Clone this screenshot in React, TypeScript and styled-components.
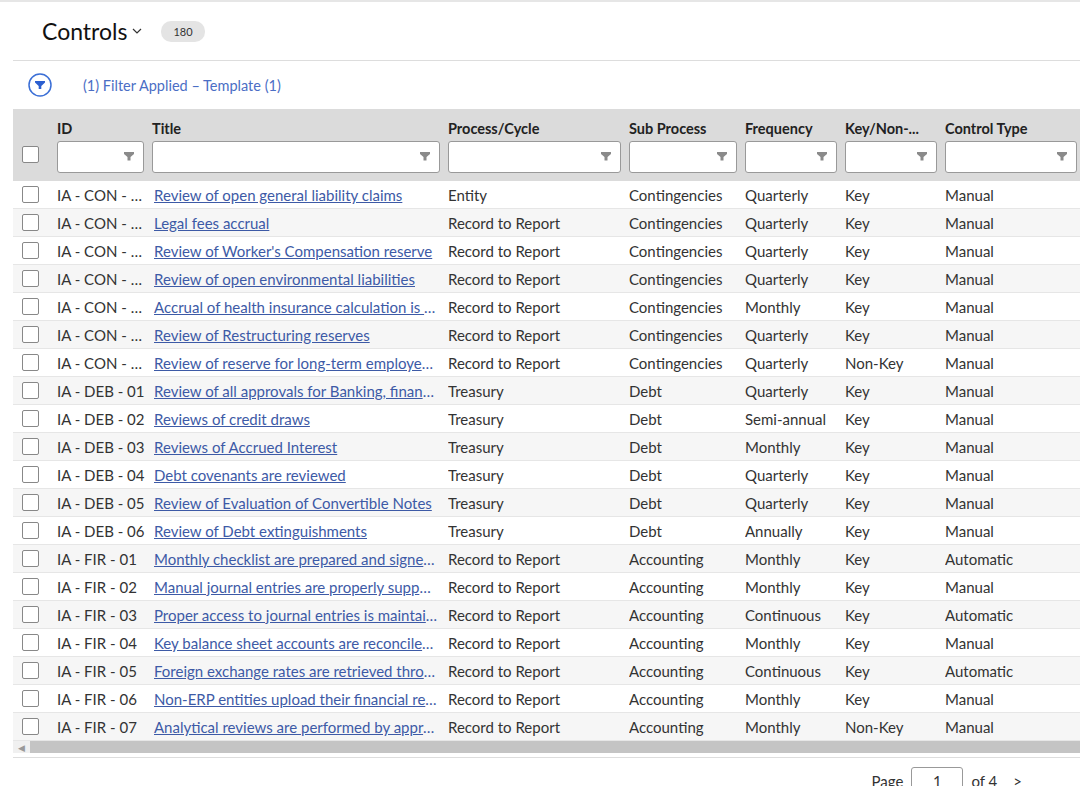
import React from "react";
import styled, { createGlobalStyle } from "styled-components";

const Global = createGlobalStyle`
  html, body { margin: 0; padding: 0; background: #fff; overflow: hidden; }
  body { font-family: "Lato", "Open Sans", sans-serif; color: #222; width: 1080px; height: 786px; }
`;

const COLS = "44px 95px 296px 181px 116px 100px 100px 140px";

const Page = styled.div`
  border-top: 2px solid #e6e6e6;
  padding-left: 13px;
  width: 1067px;
  overflow: hidden;
`;
const Header = styled.div`
  display: flex; align-items: center; height: 58px; padding-left: 29px;
  border-bottom: 1px solid #ddd;
`;
const H1 = styled.div`font-size: 23px; color: #111; display: flex; align-items: center; gap: 4px;`;
const Badge = styled.span`
  margin-left: 18px; background: #e4e4e4; border-radius: 10px; font-size: 11px;
  padding: 4px 12px; color: #333;
`;
const FilterBar = styled.div`
  display: flex; align-items: center; height: 48px; padding-left: 15px; gap: 31px;
  color: #4b6ec5; font-size: 14.5px;
`;
const Grid = styled.div`display: grid; grid-template-columns: ${COLS}; width: 1072px;`;
const HeadRow = styled(Grid)`
  background: #dbdbdb; height: 72px; align-items: end; padding-bottom: 8px; box-sizing: border-box;
`;
const HeadCell = styled.div`
  display: flex; flex-direction: column; gap: 4px; padding-right: 8px;
  font-weight: 700; font-size: 14.5px; color: #222;
`;
const FilterInput = styled.div`
  height: 32px; box-sizing: border-box; background: #fff; border: 1px solid #999; border-radius: 3px;
  display: flex; align-items: center; justify-content: flex-end; padding-right: 8px;
`;
const Box = styled.div`
  width: 15px; height: 15px; border: 1px solid #888; border-radius: 2px; background: #fff; margin-left: 9px;
`;
const Row = styled(Grid)<{ $alt: boolean }>`
  height: 28px; align-items: center; font-size: 15px; color: #333;
  background: ${p => (p.$alt ? "#f6f6f6" : "#fff")}; border-bottom: 1px solid #e6e6e6; box-sizing: border-box;
`;
const Cell = styled.div`white-space: nowrap; overflow: hidden; text-overflow: ellipsis; padding-right: 6px;`;
const Link = styled(Cell)`color: #3d5aa6; text-decoration: underline; padding-left: 2px; padding-right: 10px;`;
const Scroll = styled.div`
  height: 12px; background: #c4c4c4; border-bottom: 4px solid #fff; box-shadow: 0 1px 0 #ddd;
  display: flex; align-items: center; color: #999; font-size: 9px;
`;
const Arrow = styled.span`width: 17px; background: #f0f0f0; height: 12px; display: flex; align-items: center; justify-content: center;`;
const Pager = styled.div`
  display: flex; align-items: center; justify-content: flex-end; gap: 8px; padding-right: 58px;
  margin-top: 10px; font-size: 15px; color: #333;
`;
const PageBox = styled.div`
  width: 52px; height: 28px; border: 1px solid #999; border-radius: 3px; box-sizing: border-box;
  display: flex; align-items: center; justify-content: center;
`;

const Funnel = () => (
  <svg width="12" height="12" viewBox="0 0 12 12"><path d="M1 1h10v2L7.5 6v3.5h-3V6L1 3z" fill="#8a8a8a" /></svg>
);

const rows: [string, string, string, string, string, string, string][] = [
  ["IA - CON - 01", "Review of open general liability claims", "Entity", "Contingencies", "Quarterly", "Key", "Manual"],
  ["IA - CON - 02", "Legal fees accrual", "Record to Report", "Contingencies", "Quarterly", "Key", "Manual"],
  ["IA - CON - 03", "Review of Worker's Compensation reserve", "Record to Report", "Contingencies", "Quarterly", "Key", "Manual"],
  ["IA - CON - 04", "Review of open environmental liabilities", "Record to Report", "Contingencies", "Quarterly", "Key", "Manual"],
  ["IA - CON - 05", "Accrual of health insurance calculation is reviewed", "Record to Report", "Contingencies", "Monthly", "Key", "Manual"],
  ["IA - CON - 06", "Review of Restructuring reserves", "Record to Report", "Contingencies", "Quarterly", "Key", "Manual"],
  ["IA - CON - 07", "Review of reserve for long-term employee benefits", "Record to Report", "Contingencies", "Quarterly", "Non-Key", "Manual"],
  ["IA - DEB - 01", "Review of all approvals for Banking, financing activities", "Treasury", "Debt", "Quarterly", "Key", "Manual"],
  ["IA - DEB - 02", "Reviews of credit draws", "Treasury", "Debt", "Semi-annual", "Key", "Manual"],
  ["IA - DEB - 03", "Reviews of Accrued Interest", "Treasury", "Debt", "Monthly", "Key", "Manual"],
  ["IA - DEB - 04", "Debt covenants are reviewed", "Treasury", "Debt", "Quarterly", "Key", "Manual"],
  ["IA - DEB - 05", "Review of Evaluation of Convertible Notes", "Treasury", "Debt", "Quarterly", "Key", "Manual"],
  ["IA - DEB - 06", "Review of Debt extinguishments", "Treasury", "Debt", "Annually", "Key", "Manual"],
  ["IA - FIR - 01", "Monthly checklist are prepared and signed off", "Record to Report", "Accounting", "Monthly", "Key", "Automatic"],
  ["IA - FIR - 02", "Manual journal entries are properly supported", "Record to Report", "Accounting", "Monthly", "Key", "Manual"],
  ["IA - FIR - 03", "Proper access to journal entries is maintained", "Record to Report", "Accounting", "Continuous", "Key", "Automatic"],
  ["IA - FIR - 04", "Key balance sheet accounts are reconciled monthly", "Record to Report", "Accounting", "Monthly", "Key", "Manual"],
  ["IA - FIR - 05", "Foreign exchange rates are retrieved through", "Record to Report", "Accounting", "Continuous", "Key", "Automatic"],
  ["IA - FIR - 06", "Non-ERP entities upload their financial results", "Record to Report", "Accounting", "Monthly", "Key", "Manual"],
  ["IA - FIR - 07", "Analytical reviews are performed by appropriate", "Record to Report", "Accounting", "Monthly", "Non-Key", "Manual"],
];

const heads = ["ID", "Title", "Process/Cycle", "Sub Process", "Frequency", "Key/Non-...", "Control Type"];

export default function App() {
  return (
    <>
      <Global />
      <Page>
        <Header>
          <H1>Controls
            <svg width="12" height="12" viewBox="0 0 12 12"><path d="M2 4l4 4 4-4" stroke="#333" fill="none" strokeWidth="1.2" /></svg>
          </H1>
          <Badge>180</Badge>
        </Header>
        <FilterBar>
          <svg width="24" height="24" viewBox="0 0 24 24">
            <circle cx="12" cy="12" r="11" fill="#fff" stroke="#3b6fd6" strokeWidth="1.5" />
            <path d="M7 8h10v1.6L13.3 13v3h-2.6v-3L7 9.6z" fill="#2c5fd0" />
          </svg>
          <span>(1) Filter Applied – Template (1)</span>
        </FilterBar>
        <HeadRow>
          <div style={{ paddingBottom: 10 }}><Box /></div>
          {heads.map(h => (
            <HeadCell key={h}>{h}<FilterInput><Funnel /></FilterInput></HeadCell>
          ))}
        </HeadRow>
        {rows.map((r, i) => (
          <Row key={r[0]} $alt={i % 2 === 1}>
            <Box />
            <Cell>{r[0]}</Cell>
            <Link>{r[1]}</Link>
            <Cell>{r[2]}</Cell>
            <Cell>{r[3]}</Cell>
            <Cell>{r[4]}</Cell>
            <Cell>{r[5]}</Cell>
            <Cell>{r[6]}</Cell>
          </Row>
        ))}
        <Scroll><Arrow>◀</Arrow></Scroll>
        <Pager>
          <span>Page</span>
          <PageBox>1</PageBox>
          <span>of 4</span>
          <span style={{ marginLeft: 8 }}>&gt;</span>
        </Pager>
      </Page>
    </>
  );
}
